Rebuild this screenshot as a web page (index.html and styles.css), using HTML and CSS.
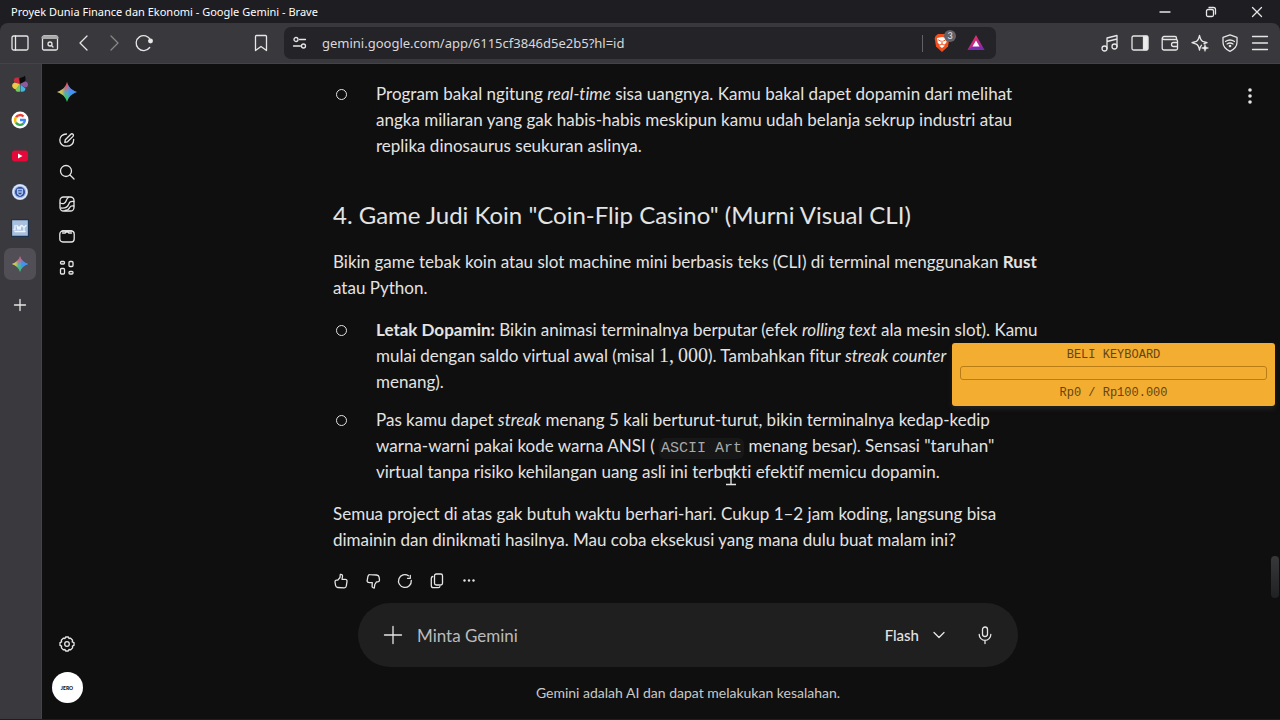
FILE: index.html
```html
<!DOCTYPE html>
<html lang="id">
<head>
<meta charset="utf-8">
<title>Proyek Dunia Finance dan Ekonomi - Google Gemini</title>
<link rel="stylesheet" href="styles.css">
</head>
<body>
<svg class="defs" aria-hidden="true">
  <defs>
    <linearGradient id="spark-v" x1="0" y1="0" x2="0" y2="1">
      <stop offset="0" stop-color="#f0444f"/><stop offset=".3" stop-color="#d0607c"/><stop offset=".5" stop-color="#55a0c8"/><stop offset=".7" stop-color="#35c07c"/><stop offset="1" stop-color="#35c84f"/>
    </linearGradient>
    <linearGradient id="spark-h" x1="0" y1="0" x2="1" y2="0">
      <stop offset="0" stop-color="#f8d21c"/><stop offset=".25" stop-color="#e9c93a" stop-opacity=".8"/><stop offset=".45" stop-color="#8ab4a0" stop-opacity="0"/><stop offset=".6" stop-color="#3c8fff" stop-opacity=".7"/><stop offset="1" stop-color="#3c8fff"/>
    </linearGradient>
    <linearGradient id="bat" x1="0" y1="0" x2="1" y2="1">
      <stop offset="0" stop-color="#ff4724"/><stop offset=".5" stop-color="#c3278f"/><stop offset="1" stop-color="#762db1"/>
    </linearGradient>
    <symbol id="spark" viewBox="0 0 20 20">
      <path fill="url(#spark-v)" d="M10 0c1.300 5 5 8.700 10 10-5 1.300-8.700 5-10 10-1.300-5-5-8.700-10-10 5-1.300 8.700-5 10-10z"/>
      <path fill="url(#spark-h)" d="M10 0c1.300 5 5 8.700 10 10-5 1.300-8.700 5-10 10-1.300-5-5-8.700-10-10 5-1.300 8.700-5 10-10z"/>
    </symbol>
  </defs>
</svg>

<div class="window">
  <header class="titlebar">
    <span class="window-title">Proyek Dunia Finance dan Ekonomi - Google Gemini - Brave</span>
    <div class="window-controls">
      <button aria-label="Minimize"><svg width="12" height="12" viewBox="0 0 12 12"><path d="M1 6h10"/></svg></button>
      <button aria-label="Restore"><svg width="12" height="12" viewBox="0 0 12 12"><rect x="1.500" y="3.500" width="7" height="7" rx="1.500"/><path d="M4 1.500h4.500a2 2 0 0 1 2 2V8"/></svg></button>
      <button aria-label="Close"><svg width="12" height="12" viewBox="0 0 12 12"><path d="M1.500 1.500l9 9M10.500 1.500l-9 9"/></svg></button>
    </div>
  </header>

  <nav class="toolbar" aria-label="Toolbar">
    <div class="nav-buttons">
      <button aria-label="Toggle tabs"><svg width="20" height="20" viewBox="0 0 20 20"><rect x="2" y="3" width="16" height="14" rx="1.500"/><path d="M5.500 3v14"/></svg></button>
      <button aria-label="Search tabs"><svg width="20" height="20" viewBox="0 0 20 20"><rect x="2.500" y="3" width="15" height="14" rx="1.500"/><path d="M3 4.500h14" stroke="#aaa" stroke-width="3"/><circle cx="10" cy="11" r="2"/><path d="M11.500 12.500l1.500 1.500"/></svg></button>
      <button aria-label="Back"><svg width="20" height="20" viewBox="0 0 20 20"><path d="M13 3L6 10l7 7"/></svg></button>
      <button aria-label="Forward" disabled><svg width="20" height="20" viewBox="0 0 20 20"><path d="M7 3l7 7-7 7"/></svg></button>
      <button aria-label="Reload"><svg width="20" height="20" viewBox="0 0 20 20"><path d="M15.700 14.500A7.500 7.500 0 1 1 16.500 7"/><circle cx="16.500" cy="8" r="1.800" fill="#eee"/></svg></button>
    </div>
    <button class="bookmark" aria-label="Bookmark"><svg width="20" height="20" viewBox="0 0 20 20"><path d="M4.500 3.500a1 1 0 0 1 1-1h9a1 1 0 0 1 1 1V17.500L10 13.500l-5.500 4z"/></svg></button>
    <div class="address">
      <svg width="16" height="16" viewBox="0 0 16 16"><circle cx="4" cy="4.500" r="2"/><path d="M7.500 4.500h6M1.500 11h7"/><circle cx="11.500" cy="11" r="2"/></svg>
      <input class="url" aria-label="Address" value="gemini.google.com/app/6115cf3846d5e2b5?hl=id">
      <div class="address-end">
        <button class="shield" aria-label="Brave Shields"><svg width="18" height="20" viewBox="0 0 18 20"><path fill="#f0501e" stroke="none" d="M5 1h8l2.500 2 .8 2.500-1.300 8L9 19l-6-5.500L1.700 5.500 2.500 3z"/><path fill="#fff" stroke="none" d="M4 5l5-1 5 1-.8 5-2 1.500.3 1.500L9 15l-2.500-2 .3-1.500-2-1.500z"/><path stroke="#f0501e" stroke-width="1" d="M5.500 7l2 1M12.500 7l-2 1M9 8v3M7 12l2-1 2 1"/></svg><span class="badge">3</span></button>
        <button aria-label="Brave Rewards"><svg width="18" height="18" viewBox="0 0 18 18"><path fill="url(#bat)" stroke="none" d="M9 1l8.500 15H.5z"/><path fill="#762db1" stroke="none" d="M.5 16h17l-5-3.500h-7z"/><path fill="#fff" stroke="none" d="M9 6.500l3.500 6h-7z"/></svg></button>
      </div>
    </div>
    <div class="tool-buttons">
      <button aria-label="Playlist"><svg width="20" height="20" viewBox="0 0 20 20"><circle cx="4.500" cy="15.500" r="2.500"/><circle cx="14.500" cy="13.500" r="2.500"/><path d="M7 15.500V5l10-2.500v11M7 8.500l10-2.500"/></svg></button>
      <button aria-label="Sidebar"><svg width="20" height="20" viewBox="0 0 20 20"><rect x="2" y="3" width="16" height="14" rx="1.500"/><path fill="#eee" d="M13.500 3.500h4v13h-4z"/></svg></button>
      <button aria-label="Wallet"><svg width="20" height="20" viewBox="0 0 20 20"><path d="M16.500 6.500V5a1.500 1.500 0 0 0-1.500-1.500H4A1.500 1.500 0 0 0 4 6.500h12a1.500 1.500 0 0 1 1.500 1.500v7.500a1.500 1.500 0 0 1-1.500 1.500H4A1.800 1.800 0 0 1 2.200 15.200V5M17.500 9.500h-4a2 2 0 0 0 0 4h4z"/></svg></button>
      <button aria-label="Leo AI"><svg width="20" height="20" viewBox="0 0 20 20"><path d="M11.500 12.300C10.500 13 10 14.500 9.500 17c-.8-4-1.500-5.200-3.200-5.900L2 9.700l4.300-1.400C8 7.600 8.700 6 9.500 2.500c.8 3.500 1.500 5.100 3.200 5.800L17 9.700l-3 1"/><path fill="#eee" stroke-width=".5" d="M15 11.500l.9 2.600 2.600.9-2.600.9-.9 2.600-.9-2.600-2.600-.9 2.600-.9z"/></svg></button>
      <button aria-label="VPN"><svg width="20" height="20" viewBox="0 0 20 20"><path d="M10 1.800l7 2.500v5c0 4-2.500 7-7 9-4.500-2-7-5-7-9v-5z"/><path d="M5.500 8.500c3-2 6-2 9 0M7 11c2-1.300 4-1.300 6 0"/><circle cx="10" cy="13" r=".7"/></svg></button>
      <button aria-label="Menu"><svg width="20" height="20" viewBox="0 0 20 20"><path d="M2.500 3.500h15M2.500 10h15M2.500 16.500h15"/></svg></button>
    </div>
  </nav>

  <div class="workspace">
    <aside class="tabs" aria-label="Tabs">
      <button aria-label="Tab 1"><svg width="18" height="18" viewBox="0 0 18 18" class="solid"><path fill="#d2293c" d="M9 9L3.500 7A3 3 0 0 1 4 3l3.500-.8z"/><path fill="#0b0b0b" d="M9 9L8.500 3.500C10 2 12 2.500 14 .8 14.500 3 15 5 14 6.500z"/><path fill="#efc747" d="M9 9l-3.500 5A3.500 3.500 0 0 1 1.500 9l2-1.500z"/><path fill="#8b5b9d" d="M9 9l5-2.500c2.500-.5 4 3 2 5.500l-2 .5z"/><path fill="#78c862" d="M9 9v7.500c-2 .8-4.500 0-4.500-2z"/><path fill="#45b5dc" d="M9.500 9.500l5 4c0 2.500-2.500 4-5 3z"/></svg></button>
      <button aria-label="Google"><svg width="18" height="18" viewBox="0 0 18 18" class="ring"><circle cx="9" cy="9" r="8.500" fill="#fff"/><path stroke="#ea4335" d="M5 6.200A4.900 4.900 0 0 1 12.500 5.500"/><path stroke="#fbbc05" d="M5 6.200A5 5 0 0 0 5 11.800"/><path stroke="#34a853" d="M5 11.800A4.900 4.900 0 0 0 12.300 12.600"/><path stroke="#4285f4" d="M12.300 12.600A4.800 4.800 0 0 0 13.900 9H9"/></svg></button>
      <button aria-label="YouTube"><svg width="18" height="18" viewBox="0 0 18 18" class="solid"><rect x="1" y="3.500" width="16" height="11" rx="3" fill="#e5093a"/><path fill="#fff" d="M7 6.500L11.500 9 7 11.500z"/></svg></button>
      <button aria-label="Tab 4"><svg width="18" height="18" viewBox="0 0 18 18" class="solid"><circle cx="9" cy="9" r="8" fill="#a9bde6"/><circle cx="9" cy="9" r="6.800" fill="none" stroke="#e6ecfa" stroke-dasharray="1 1"/><circle cx="9" cy="9" r="5" fill="#284b9e"/><path fill="none" stroke="#a9bde6" d="M6.500 6.500h5v4L9 12.500l-2.500-2zM7.500 9h3"/></svg></button>
      <button aria-label="Tab 5"><svg width="18" height="18" viewBox="0 0 18 18" class="solid"><rect x=".5" y=".5" width="17" height="17" fill="#a8c0dd" stroke="#1b3352"/><path fill="none" stroke="#eef5ff" d="M4 6.500v4H3M6 6.500l1 4 1-3 1 3 1-4M11 6.500l2 2 2-2M13 8.500v3M4 12.500h10"/></svg></button>
      <button class="active" aria-label="Gemini"><svg width="16" height="16"><use href="#spark"/></svg></button>
      <button class="new-tab" aria-label="New tab"><svg width="18" height="18" viewBox="0 0 18 18"><path d="M9 3.500v11M3.500 9h11"/></svg></button>
    </aside>

    <div class="app">
      <aside class="rail" aria-label="Gemini">
        <a class="brand" href="#" aria-label="Gemini"><svg width="20" height="20"><use href="#spark"/></svg></a>
        <button aria-label="Percakapan baru"><svg width="18" height="18" viewBox="0 0 18 18"><path d="M8.500 3C4.500 3 1.800 5.500 1.800 9s2.700 6.200 6.400 6.200c4.300 0 7.500-2.200 7.500-6.700M6.800 11.300l.5-2.600 5.500-5.500a1.500 1.500 0 0 1 2.200 2.200L9.500 10.800z"/></svg></button>
        <button aria-label="Telusuri"><svg width="18" height="18" viewBox="0 0 18 18"><circle cx="8" cy="8" r="5.500"/><path d="M12 12l4 4"/></svg></button>
        <button aria-label="Gambar"><svg width="18" height="18" viewBox="0 0 18 18"><rect x="2" y="2" width="14" height="14" rx="3.500"/><path d="M2.200 8c3 1.300 5.300.3 6-2.200.4-1.500 1-2.700 2.300-3.600M3 13c5.500.5 7-1.500 7.800-4C11.300 7 13 6 15.800 6.500M7 15.500c3 0 4-1.500 4.700-3 .7-1.300 2-2 4-1.500"/></svg></button>
        <button aria-label="Koleksi"><svg width="18" height="18" viewBox="0 0 18 18"><rect x="1.800" y="4" width="14.400" height="11" rx="3"/><path d="M4.500 3.800h9M4.500 6h2.700l.8-1h2l.8 1h2.700"/></svg></button>
        <button aria-label="Aplikasi"><svg width="18" height="18" viewBox="0 0 18 18"><rect x="2.500" y="2.500" width="4" height="2.500" rx="1"/><rect x="11" y="2.500" width="4" height="5" rx="1"/><rect x="2.500" y="9.500" width="4" height="5.500" rx="1"/><rect x="11" y="12.500" width="4" height="2.500" rx="1"/></svg></button>
        <div class="rail-end">
          <button aria-label="Setelan"><svg width="18" height="18" viewBox="0 0 18 18"><path d="M7.600 2h2.800l.6 1.500 1.600-.3 2 2-.4 1.600L16 7.600v2.800l-1.600.8.2 1.700-1.900 1.900-1.700-.3-.7 1.500H7.600L7 14.500l-1.700.3-1.900-1.900.2-1.700L2 10.400V7.600l1.600-.8-.3-1.600 2-2 1.700.3z"/><circle cx="9" cy="9" r="2.300"/></svg></button>
          <button class="avatar" aria-label="Akun">JERO</button>
        </div>
      </aside>

      <main class="chat">
        <button class="more" aria-label="Opsi lainnya"><svg width="20" height="20" viewBox="0 0 20 20" class="dots"><circle cx="10" cy="4" r="1.800"/><circle cx="10" cy="10" r="1.800"/><circle cx="10" cy="16" r="1.800"/></svg></button>
        <article class="message">
          <ul>
            <li>Program bakal ngitung <em>real-time</em> sisa uangnya. Kamu bakal dapet dopamin dari melihat<br>angka miliaran yang gak habis-habis meskipun kamu udah belanja sekrup industri atau<br>replika dinosaurus seukuran aslinya.</li>
          </ul>
          <h3>4. Game Judi Koin "Coin-Flip Casino" (Murni Visual CLI)</h3>
          <p>Bikin game tebak koin atau slot machine mini berbasis teks (CLI) di terminal menggunakan <strong>Rust</strong><br>atau Python.</p>
          <ul>
            <li><strong>Letak Dopamin:</strong> Bikin animasi terminalnya berputar (efek <em>rolling text</em> ala mesin slot). Kamu<br>mulai dengan saldo virtual awal (misal <span class="math">1,&thinsp;000</span>). Tambahkan fitur <em>streak counter</em><br>menang).</li>
            <li>Pas kamu dapet <em>streak</em> menang 5 kali berturut-turut, bikin terminalnya kedap-kedip<br>warna-warni pakai kode warna ANSI ( <code>ASCII Art</code> menang besar). Sensasi "taruhan"<br>virtual tanpa risiko kehilangan uang asli ini terbukti efektif memicu dopamin.</li>
          </ul>
          <p>Semua project di atas gak butuh waktu berhari-hari. Cukup 1–2 jam koding, langsung bisa<br>dimainin dan dinikmati hasilnya. Mau coba eksekusi yang mana dulu buat malam ini?</p>
          <div class="actions">
            <button aria-label="Suka"><svg width="16" height="16" viewBox="0 0 16 16"><path d="M2 9c0-1.200.6-1.900 1.500-1.900h1.300L7 4.500 7.300 1.500c1.500-.4 2.400.6 2.200 2L9 6.300h3.200c1.300 0 2 .9 1.800 2l-.7 4.700c-.2 1.400-1 2-2.300 1.900l-6.300-.4c-1.300-.1-1.900-.8-2.100-2z"/></svg></button>
            <button aria-label="Tidak suka"><svg width="16" height="16" viewBox="0 0 16 16"><path d="M14.500 7c0 1.200-.6 1.800-1.500 1.800h-1.500L9.800 11.500 9.300 15c-1.600.1-2.400-.9-2.200-2.200L7.300 9.700H4.500C2.800 9.700 1.900 8.800 2.200 7.500L2.900 3.500c.3-1.300 1-1.900 2.200-1.800l6.400.3c1.500.1 2.400.9 2.600 2.200z"/></svg></button>
            <button aria-label="Ulangi"><svg width="16" height="16" viewBox="0 0 16 16"><path d="M14.300 7.500A6.400 6.400 0 1 1 11.500 2.700M10.500 5.300h2.800V2.500"/></svg></button>
            <button aria-label="Salin"><svg width="16" height="16" viewBox="0 0 16 16"><rect x="5.500" y="1" width="8" height="11" rx="1.800"/><path d="M3.800 3.500C2.700 3.700 2.300 4.300 2.300 5.300v7.200a2.200 2.200 0 0 0 2.200 2.200h4.500c1 0 1.500-.3 1.800-1"/></svg></button>
            <button aria-label="Lainnya"><svg width="16" height="16" viewBox="0 0 16 16" class="dots"><circle cx="3.500" cy="7.500" r="1.200"/><circle cx="8" cy="7.500" r="1.200"/><circle cx="12.500" cy="7.500" r="1.200"/></svg></button>
          </div>
        </article>
        <form class="composer">
          <button type="button" aria-label="Tambah"><svg width="20" height="20" viewBox="0 0 20 20"><path d="M10 1.500v17M1.500 10h17"/></svg></button>
          <input type="text" placeholder="Minta Gemini" aria-label="Minta Gemini">
          <button type="button" class="model">Flash <svg width="14" height="14" viewBox="0 0 14 14"><path d="M2 4.500l5 5 5-5"/></svg></button>
          <button type="button" aria-label="Mikrofon"><svg width="20" height="20" viewBox="0 0 20 20"><rect x="7.500" y="2" width="5" height="9.500" rx="2.500"/><path d="M4.200 9.500a5.800 5.800 0 0 0 11.600 0M10 15.300V18.500"/></svg></button>
        </form>
        <p class="note">Gemini adalah AI dan dapat melakukan kesalahan.</p>
        <div class="scroll-thumb"></div>
      </main>
    </div>
  </div>

  <section class="goal" aria-label="Target">
    <div>BELI KEYBOARD</div>
    <div class="goal-bar" role="progressbar" aria-valuenow="0" aria-valuemin="0" aria-valuemax="100000"></div>
    <div>Rp0 / Rp100.000</div>
  </section>
  <svg class="cursor" width="10" height="18" viewBox="0 0 10 18"><path d="M1 1.500h3l1 1 1-1h3M5 2.500v13M0 16.500h10"/></svg>
</div>
</body>
</html>
```
FILE: styles.css
```css
* { box-sizing: border-box; }

body {
  margin: 0;
  background: #000;
  color: #e3e3e3;
  font-family: Lato, "Liberation Sans", sans-serif;
  font-variant-ligatures: none;
}

button, input {
  padding: 0;
  border: 0;
  outline: 0;
  background: none;
  color: inherit;
  font: inherit;
}

button { display: flex; align-items: center; justify-content: center; }

svg { display: block; flex: none; fill: none; stroke: #e6e6e6; stroke-width: 1.3; stroke-linecap: round; stroke-linejoin: round; }
svg.dots { fill: #e3e3e3; stroke: none; }
svg.solid { stroke: none; }
svg.ring { stroke: none; }
svg.ring path { stroke-width: 2.4; stroke-linecap: butt; fill: none; }
use { stroke: none; }
.defs { position: absolute; width: 0; height: 0; }

.window {
  position: relative;
  display: flex;
  flex-direction: column;
  height: 100vh;
  padding-bottom: 1px;
  overflow: hidden;
  background: #1e1d21;
}

.titlebar {
  display: flex;
  align-items: center;
  justify-content: space-between;
  height: 23px;
  padding: 0 0 0 11px;
  font-family: "Noto Sans", "Open Sans", sans-serif;
  font-size: 11px;
  color: #fff;
}
.window-controls { display: flex; }
.window-controls button { width: 46px; height: 23px; }

.toolbar {
  display: flex;
  align-items: center;
  height: 41px;
  padding: 0 10px;
  border-bottom: 1px solid #454348;
  border-radius: 8px 8px 0 0;
  background: #39383c;
}
.nav-buttons { display: flex; width: 241px; gap: 10px; }
.nav-buttons button:nth-child(3) { margin-left: 4px; }
.nav-buttons button:disabled { opacity: .45; }
.address {
  display: flex;
  flex: 0 1 712px;
  align-items: center;
  height: 32px;
  margin-left: 13px;
  padding: 0 11px 0 8px;
  border-radius: 7px;
  background: #242328;
}
.url {
  flex: 1;
  min-width: 0;
  margin-left: 14px;
  font-family: "Noto Sans", "Open Sans", sans-serif;
  font-size: 13px;
  color: #d8d8da;
}
.address-end {
  display: flex;
  align-items: center;
  gap: 16px;
  height: 17px;
  padding-left: 10px;
  border-left: 1px solid #626167;
}
.shield { position: relative; }
.badge {
  position: absolute;
  top: -3px;
  right: -5px;
  width: 12px;
  border-radius: 6px;
  background: #636267;
  font-size: 9px;
  line-height: 12px;
  text-align: center;
}
.tool-buttons { display: flex; gap: 10px; margin-left: auto; }

.workspace { display: flex; flex: 1; min-height: 0; }
.tabs {
  display: flex;
  flex-direction: column;
  align-items: center;
  gap: 4px;
  width: 42px;
  padding: 4px 2px 0 0;
  border-right: 1px solid #454348;
  background: #3a393d;
}
.tabs button { width: 32px; height: 32px; border-radius: 7px; }
.tabs .active { background: #514f55; }
.tabs .new-tab { margin-top: 5px; }

.app { display: flex; flex: 1; min-width: 0; background: #0f0f0f; }
.rail {
  display: flex;
  flex-direction: column;
  align-items: center;
  width: 54px;
  padding: 12px 4px 16px 0;
}
.rail button, .brand { display: flex; align-items: center; justify-content: center; width: 32px; height: 32px; }
.brand { margin-bottom: 16px; }
.rail-end { display: flex; flex-direction: column; align-items: center; gap: 12px; margin-top: auto; }
.rail .avatar {
  width: 31px;
  height: 31px;
  border-radius: 50%;
  background: #fff;
  color: #111;
  font-size: 5px;
  font-weight: 900;
}

.chat {
  position: relative;
  display: flex;
  flex: 1;
  flex-direction: column;
  align-items: center;
  min-width: 0;
  padding-top: 17px;
}
.more { position: absolute; top: 22px; right: 20px; }
.message { width: 100%; max-width: 710px; font-size: 17px; line-height: 26px; white-space: nowrap; }
.message p { margin: 0 0 16px; }
.message h3 { margin: 42px 0 20px; font-size: 24px; font-weight: 400; line-height: 28px; }
.message ul { margin: 0 0 16px; padding-left: 43px; list-style: none; }
.message li { position: relative; }
.message li + li { margin-top: 12px; }
.message li::before {
  content: "";
  position: absolute;
  top: 8px;
  left: -40px;
  width: 9px;
  height: 9px;
  border: 1px solid #e3e3e3;
  border-radius: 50%;
}
.math { font-family: "Liberation Serif", serif; font-size: 20px; line-height: 20px; }
.message code {
  padding: 2px;
  border-radius: 6px;
  background: #171717;
  color: #a8a9a9;
  font-family: "Liberation Mono", monospace;
  font-size: 15px;
  line-height: 16px;
}
.actions { display: flex; gap: 16px; margin-top: 20px; }

.composer {
  display: flex;
  align-items: center;
  width: 100%;
  max-width: 660px;
  height: 64px;
  margin-top: 14px;
  padding: 0 23px 0 25px;
  border-radius: 32px;
  background: #1f1f20;
}
.composer input { flex: 1; min-width: 0; margin-left: 14px; font-size: 17px; }
.composer input::placeholder { color: #b9bbbd; opacity: 1; }
.model { gap: 13px; margin-right: 29px; font-size: 15px; font-weight: 500; }
.note { margin: 18px 0 0; font-size: 14px; line-height: 16px; color: #c8c9c9; }
.scroll-thumb {
  position: absolute;
  top: 492px;
  right: 1px;
  width: 8px;
  height: 42px;
  border-radius: 4px;
  background: linear-gradient(#36383a, #202122);
}

.goal {
  position: absolute;
  top: 343px;
  right: 5px;
  width: 323px;
  padding: 4px 8px 5px;
  border-radius: 3px;
  background: #f3ad31;
  box-shadow: 0 3px 5px #222;
  color: #65450f;
  font-family: "Liberation Mono", monospace;
  font-size: 12px;
  line-height: 16px;
  text-align: center;
}
.goal-bar { height: 14px; margin: 3px 0 5px; border: 1px solid #b87d15; border-radius: 3px; }
.cursor { position: absolute; top: 468px; left: 726px; }
```
